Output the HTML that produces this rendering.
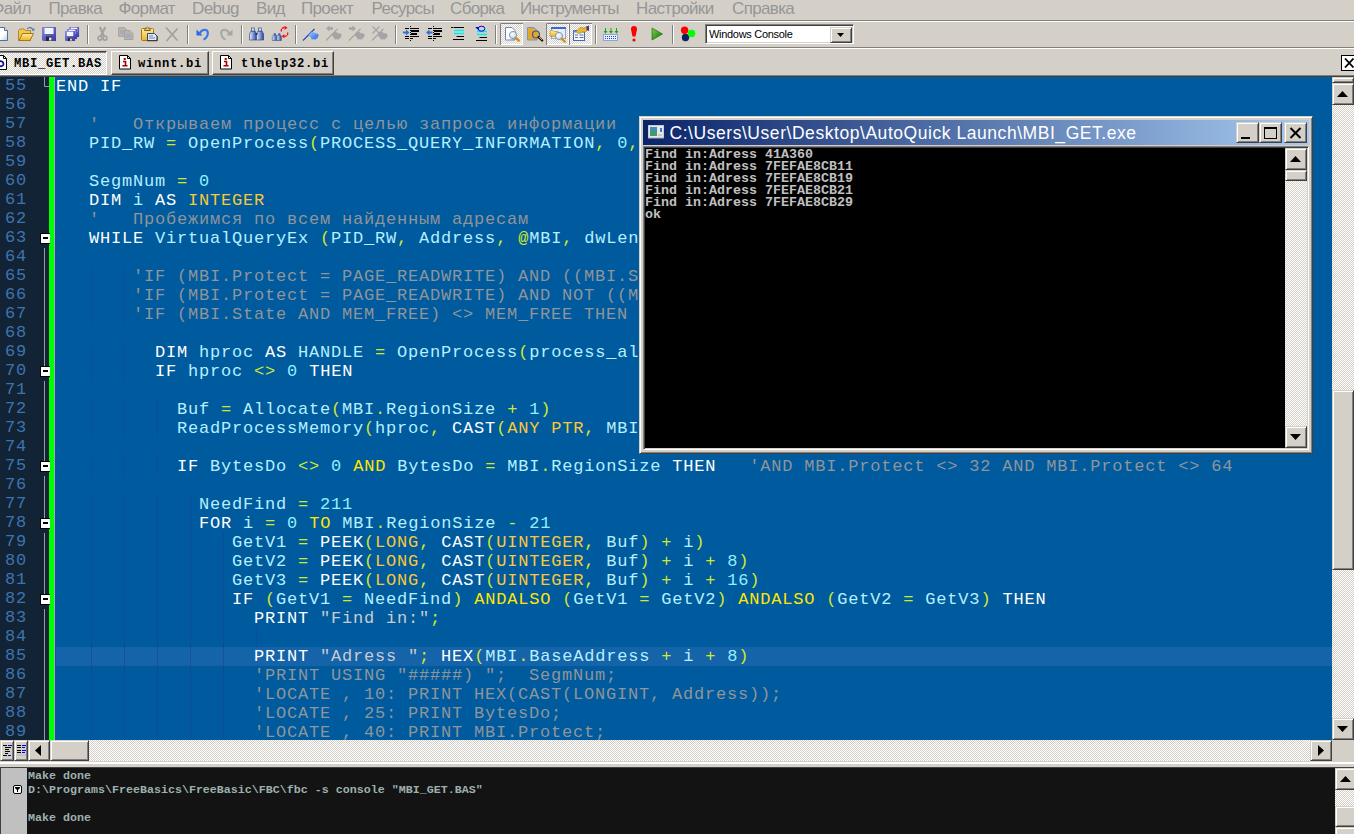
<!DOCTYPE html>
<html lang="ru">
<head>
<meta charset="utf-8">
<title>MBI_GET.BAS</title>
<style>
*{box-sizing:border-box;margin:0;padding:0}
html,body{width:1354px;height:834px;overflow:hidden;background:#d4d0c8}
body{position:relative;font-family:"Liberation Sans",sans-serif;color:#000}
.abs{position:absolute}
/* menu */
#menu{position:absolute;left:0;top:0;width:1354px;height:20px;background:#d4d0c8;overflow:hidden}
#menu span{position:absolute;top:-1px;font-size:17px;line-height:20px;color:#969696;white-space:nowrap;letter-spacing:-0.65px}
.hsep{position:absolute;left:0;width:1354px;height:2px;border-top:1px solid #808080;border-bottom:1px solid #fff}
/* toolbar */
#tb{position:absolute;left:0;top:22px;width:1354px;height:25px;background:#d4d0c8}
.vsep{position:absolute;top:3px;width:2px;height:19px;border-left:1px solid #808080;border-right:1px solid #fff}
/* tabs */
#tabs{position:absolute;left:0;top:49px;width:1354px;height:27px;background:#d4d0c8}
.tab{position:absolute;top:2px;height:24px;background:#d4d0c8;border:1px solid;border-color:#fff #404040 #404040 #fff;box-shadow:inset -1px -1px 0 #808080}
.tab span{position:absolute;top:4px;font-family:"Liberation Mono",monospace;font-weight:bold;font-size:12.2px;letter-spacing:.68px;line-height:16px;white-space:nowrap;color:#000}
.tab.act{border-color:#404040 #fff #fff #404040;box-shadow:inset 1px 1px 0 #808080;background-color:#eae8e3;background-image:conic-gradient(#fff 25%,#d4d0c8 0 50%,#fff 0 75%,#d4d0c8 0);background-size:2px 2px}
/* editor */
#ed{position:absolute;left:0;top:77px;width:1332px;height:663px;background:#005a9e;overflow:hidden}
#gut{position:absolute;left:0;top:0;width:49px;height:664px;background:#122336}
#grn{position:absolute;left:49px;top:0;width:5px;height:664px;background:#0f0}
#gl{position:absolute;left:54px;top:0;width:1px;height:664px;background:#a8acb0}
.mono{font-family:"Liberation Mono",monospace;font-size:17px;letter-spacing:.8px;line-height:19px;white-space:pre}
#nums{position:absolute;left:5px;top:-1px;color:#3d74ad}
#code{position:absolute;left:56px;top:0;color:#b4f0ff}
#cur{position:absolute;left:56px;top:570px;width:1276px;height:19px;background:#1563a8}
.k{color:#fff}.t{color:#f8c838}.y{color:#ffe600}.o{color:#d0e830}.c{color:#8f9599}.s{color:#c8ccd0}.n{color:#90f0ff}
/* generic classic controls */
.btn{position:absolute;background:#d4d0c8;border:1px solid;border-color:#d4d0c8 #404040 #404040 #d4d0c8;box-shadow:inset 1px 1px 0 #fff,inset -1px -1px 0 #808080}
.dith{position:absolute;background-color:#eae8e3;background-image:conic-gradient(#fff 25%,#d4d0c8 0 50%,#fff 0 75%,#d4d0c8 0);background-size:2px 2px}
.arr{position:absolute;background:#000}
.arr.up{width:11px;height:6px;clip-path:polygon(50% 0,100% 100%,0 100%)}
.arr.dn{width:11px;height:6px;clip-path:polygon(0 0,100% 0,50% 100%)}
.arr.lf{width:6px;height:11px;clip-path:polygon(100% 0,100% 100%,0 50%)}
.arr.rt{width:6px;height:11px;clip-path:polygon(0 0,100% 50%,0 100%)}
/* editor scrollbars */
#vs{position:absolute;left:1332px;top:77px;width:22px;height:663px}
#hs{position:absolute;left:0;top:740px;width:1354px;height:22px;background:#d4d0c8}
#split{position:absolute;left:0;top:762px;width:1354px;height:6px;background:#d4d0c8;border-top:2px solid #fff;border-bottom:1px solid #404040}
/* output pane */
#out{position:absolute;left:0;top:768px;width:1354px;height:66px;background:#131313;overflow:hidden;border-left:1px solid #404040}
#outg{position:absolute;left:0;top:0;width:26px;height:66px;background:#c0c0c0}
#outt{position:absolute;left:27px;top:1px;font-family:"Liberation Mono",monospace;font-weight:bold;font-size:11.67px;line-height:14px;white-space:pre;color:#9db0ae}
#ovs{position:absolute;left:1334px;top:0;width:22px;height:66px}
/* console window */
#con{position:absolute;left:639px;top:116px;width:674px;height:338px;background:#d4d0c8;border:1px solid;border-color:#d4d0c8 #404040 #404040 #d4d0c8;box-shadow:inset 1px 1px 0 #fff,inset -1px -1px 0 #808080}
#ctitle{position:absolute;left:3px;top:3px;width:666px;height:25px;background:linear-gradient(90deg,#0a246a 0%,#a6caf0 100%)}
#ctitle .tx{position:absolute;left:26.5px;top:1px;font-size:17.5px;letter-spacing:.55px;line-height:25px;color:#fff;white-space:nowrap}
#ccl{position:absolute;left:3px;top:29px;width:666px;height:304px;background:#000;border:1px solid;border-color:#808080 #fff #fff #808080;box-shadow:inset 1px 1px 0 #404040,inset -1px -1px 0 #d4d0c8}
#ctext{position:absolute;left:1px;top:2px;font-family:"Liberation Mono",monospace;font-weight:bold;font-size:13.33px;line-height:12px;white-space:pre;color:#c0c0c0}
#cvs{position:absolute;left:641px;top:1px;width:22px;height:300px}
.cb{position:absolute;top:2px;width:23px;height:21px}
#combo{position:absolute;left:705px;top:24px;width:149px;height:20px;background:#fff;border:1px solid;border-color:#808080 #fff #fff #808080;box-shadow:inset 1px 1px 0 #404040,inset -1px -1px 0 #d4d0c8}
#combo .tx{position:absolute;left:3px;top:2px;font-size:11px;letter-spacing:-.3px;line-height:14px;color:#000;white-space:nowrap}
</style>
</head>
<body>
<div id="menu">
<span style="left:-8.5px">Файл</span><span style="left:48.5px">Правка</span><span style="left:118.5px">Формат</span><span style="left:192px">Debug</span><span style="left:256px">Вид</span><span style="left:301px">Проект</span><span style="left:371.5px">Ресурсы</span><span style="left:450px">Сборка</span><span style="left:520px">Инструменты</span><span style="left:636px">Настройки</span><span style="left:732px">Справка</span>
</div>
<div class="hsep" style="top:20px"></div>
<div id="tb"></div>
<!--TBSVG-->
<svg id="tbs" class="abs" style="left:0;top:22px" width="1354" height="25" viewBox="0 22 1354 25">
<defs>
<linearGradient id="gdoc" x1="0" y1="0" x2="1" y2="1"><stop offset="0" stop-color="#fff"/><stop offset=".6" stop-color="#fff"/><stop offset="1" stop-color="#b8c8e0"/></linearGradient>
<linearGradient id="gfld" x1="0" y1="0" x2="0" y2="1"><stop offset="0" stop-color="#fff0a0"/><stop offset="1" stop-color="#f0b020"/></linearGradient>
<linearGradient id="gdsk" x1="0" y1="0" x2="1" y2="1"><stop offset="0" stop-color="#8888e0"/><stop offset="1" stop-color="#3838a8"/></linearGradient>
<linearGradient id="gbin" x1="0" y1="0" x2="1" y2="0"><stop offset="0" stop-color="#e8eefc"/><stop offset="1" stop-color="#2848a0"/></linearGradient>
<linearGradient id="gply" x1="0" y1="0" x2="1" y2="1"><stop offset="0" stop-color="#80d040"/><stop offset="1" stop-color="#107010"/></linearGradient>
<radialGradient id="glens" cx=".4" cy=".4" r=".7"><stop offset="0" stop-color="#fff"/><stop offset="1" stop-color="#b8d0e8"/></radialGradient>
<linearGradient id="gflag" x1="0" y1="0" x2="1" y2="1"><stop offset="0" stop-color="#a8c8ff"/><stop offset="1" stop-color="#2060e0"/></linearGradient>
<g id="sep"><rect x="0" y="25" width="1" height="19" fill="#808080"/><rect x="1" y="25" width="1" height="19" fill="#fff"/></g>
<g id="disk"><path d="M0 0h14v14H1l-1-1z" fill="url(#gdsk)"/><rect x="2.5" y="1" width="9" height="6" fill="#f4f4fc"/><rect x="4" y="9.5" width="6" height="4.5" fill="#282838"/><rect x="7" y="10.5" width="2.5" height="3" fill="#e0e0e8"/></g>
<g id="flag"><path d="M0 12L11.500 .5" fill="none" stroke-width="1.300"/><path d="M8.800 3.200C10.500 2.800 11.500 5 13 4.800S15 5.500 15.900 7C14.800 7.800 14.600 8.800 14.900 9.800C13.500 9.600 12.800 10.300 12.300 11.400C10.800 10.200 9.800 11.300 8.600 10.900C8.400 9.300 7 8.600 5.600 6.600Z" stroke="none"/></g>
<g id="gbm"><use href="#flag" fill="#a4a4a4" stroke="#a4a4a4"/></g>
<g id="lines" fill="#000"><rect x="2" y="2" width="4" height="1"/><rect x="8" y="2" width="8" height="1"/><rect x="8" y="4" width="8" height="2"/><rect x="8" y="7" width="6" height="2"/><rect x="2" y="10" width="4" height="1"/><rect x="8" y="10" width="8" height="1"/><rect x="2" y="12" width="4" height="1"/><rect x="8" y="12" width="2" height="1"/><rect x="7" y="0" width="1" height="1"/><rect x="7" y="2" width="1" height="1"/><rect x="7" y="4" width="1" height="1"/><rect x="7" y="6" width="1" height="1"/><rect x="7" y="8" width="1" height="1"/><rect x="7" y="10" width="1" height="1"/><rect x="7" y="12" width="1" height="1"/><rect x="7" y="14" width="1" height="1"/></g>
<g id="lens"><circle cx="0" cy="0" r="3.600" fill="url(#glens)" stroke="#8898b0" stroke-width="1"/><path d="M2.800 2.800l3 2.800" stroke="#d89018" stroke-width="2.400" stroke-linecap="round"/></g>
<pattern id="dp" width="2" height="2" patternUnits="userSpaceOnUse"><rect width="2" height="2" fill="#d4d0c8"/><rect width="1" height="1" fill="#fff"/><rect x="1" y="1" width="1" height="1" fill="#fff"/></pattern>
<g id="pbtn"><rect x="0" y="0" width="23" height="22" fill="url(#dp)"/><path d="M.5 22V.5H23" fill="none" stroke="#808080"/><path d="M22.500 1v20.500H1" fill="none" stroke="#fff"/></g>
</defs>
<!-- new -->
<path d="M-4 27.500h8.500l3 3V40.500h-11.500z" fill="url(#gdoc)" stroke="#5070a0"/><path d="M4.500 27.500v3h3" fill="#dde6f4" stroke="#5070a0"/>
<!-- open -->
<path d="M18.500 40.500v-10l1.500-1.500h4l1.500 1.500h5v10z" fill="#f0c850" stroke="#b08828"/><path d="M19 40.500l3.500-7h11l-3.500 7z" fill="url(#gfld)" stroke="#a87818"/><path d="M27 29c1.500-2 4.500-2 6 .5" fill="none" stroke="#4878c0" stroke-width="1.200"/><path d="M31.500 30.500l2.700.5.300-3z" fill="#4878c0"/>
<!-- save / save all -->
<use href="#disk" x="42" y="27"/>
<g transform="translate(69 27) scale(.72)"><use href="#disk"/></g><g transform="translate(67 29) scale(.72)"><use href="#disk"/></g><g transform="translate(65 31) scale(.72)"><use href="#disk"/></g>
<use href="#sep" x="87"/>
<!-- cut (disabled) -->
<g stroke="#a0a0a0" fill="none"><path d="M99.800 27l4.400 9.500M105.200 27l-4.400 9.500" stroke-width="2"/><circle cx="100" cy="38.200" r="1.900" stroke-width="1.600"/><circle cx="105" cy="38.200" r="1.900" stroke-width="1.600"/></g>
<!-- copy (disabled) -->
<path d="M118.500 27.500h6l3 3v6h-9z" fill="#b4b4b4" stroke="#a8a8a8"/><path d="M124.500 30.500h5.500l3 3v6h-8.500z" fill="#b4b4b4" stroke="#a4a4a4"/><path d="M120 31h5M120 33h4M126 35h5M126 37h5" stroke="#a0a0a0" stroke-width=".8"/>
<!-- paste -->
<rect x="141.500" y="28.500" width="12" height="12" rx="1" fill="url(#gfld)" stroke="#a87818"/><path d="M144.500 30.500l1-2.500h4l1 2.500z" fill="#e8d890" stroke="#806020"/><circle cx="147.500" cy="28" r="1" fill="#fff8c0" stroke="#806020" stroke-width=".6"/><path d="M147.500 33.500h7l2.500 2.500v4.500h-9.500z" fill="#dfe8f8" stroke="#284878"/><path d="M149 36h4M149 38h6" stroke="#6080b0" stroke-width=".9"/><path d="M147 40.800h10.300V36" fill="none" stroke="#503010" stroke-width=".8"/>
<!-- delete (disabled) -->
<path d="M166 27.500l11.500 13M177.500 28.500l-11 12.500" stroke="#a0a0a0" stroke-width="1.700" fill="none"/>
<use href="#sep" x="187"/>
<!-- undo -->
<path d="M196.500 29.500v6h6z" fill="#2868e0"/><path d="M200 33c1.500-3.800 7.300-4.600 7.800-.5.300 2.600-1 4.800-3.400 6.600" fill="none" stroke="#3878e8" stroke-width="2.200" stroke-linecap="round"/>
<!-- redo (disabled) -->
<path d="M232.500 29.500v6h-6z" fill="#a4a4a4"/><path d="M229 33c-1.500-3.800-7.300-4.600-7.800-.5-.3 2.600 1 4.800 3.400 6.600" fill="none" stroke="#a8a8a8" stroke-width="2.200" stroke-linecap="round"/>
<use href="#sep" x="241"/>
<!-- find -->
<g><path d="M251 31h4l1.500 3v6h-7v-6z" fill="url(#gbin)" stroke="#203880" stroke-width=".6"/><rect x="251.500" y="28" width="3" height="3" fill="#d8e0f8" stroke="#203880" stroke-width=".6"/><path d="M258 31h4l1.500 3v6h-7v-6z" fill="url(#gbin)" stroke="#203880" stroke-width=".6"/><rect x="258.500" y="28" width="3" height="3" fill="#d8e0f8" stroke="#203880" stroke-width=".6"/><rect x="255.500" y="33" width="2" height="2" fill="#203880"/></g>
<!-- replace -->
<g><path d="M273.500 35h2.500l.8 1.500v4h-4.500v-4z" fill="url(#gbin)" stroke="#203880" stroke-width=".5"/><rect x="273.800" y="33.300" width="2" height="1.700" fill="#3858b0"/><path d="M278 35h2.500l.8 1.500v4h-4.500v-4z" fill="url(#gbin)" stroke="#203880" stroke-width=".5"/><rect x="278.300" y="33.300" width="2" height="1.700" fill="#3858b0"/><path d="M281.500 31.500c-1-2.500 1-4 3.500-3.800M287.500 32.500c1 2.500-1 4-3.500 3.800" fill="none" stroke="#f00" stroke-width="1.300" stroke-dasharray="2.500 .5"/><path d="M284.500 25.800l3 2-3 2zM284.500 34.300l-3 2 3 2z" fill="#f00"/></g>
<use href="#sep" x="295"/>
<!-- bookmarks -->
<use href="#flag" x="303" y="28.500" fill="url(#gflag)" stroke="#2850b0"/>
<use href="#gbm" x="326" y="28.500"/><path d="M326 28.500l3.500-3v1.800h3.500v2.400h-3.500v1.800z" fill="#a4a4a4"/>
<use href="#gbm" x="349" y="28.500"/><path d="M356 28.500l-3.500-3v1.800h-3.500v2.400h3.500v1.800z" fill="#a4a4a4"/>
<use href="#gbm" x="372" y="28.500"/><path d="M372.500 26.500l7 7M379.500 26.500l-7 7" stroke="#a4a4a4" stroke-width="1.300"/>
<use href="#sep" x="395"/>
<!-- indent / unindent -->
<use href="#lines" x="403" y="26"/><path d="M403 31.500h3v-2l3.500 3-3.500 3v-2h-3z" fill="#3070e0"/>
<use href="#lines" x="426" y="26"/><path d="M432.500 31.500h-3v-2l-3.500 3 3.500 3v-2h3z" fill="#3070e0"/>
<!-- format -->
<path d="M451 27.500h2M453.500 27.500h10.500M456.500 36.500h7.500M453 39.500h11" stroke="#000" stroke-width="1.200"/><path d="M454 30.500h10M454 33.500h10" stroke="#00f0f0" stroke-width="1.300"/>
<!-- unformat -->
<path d="M477 31.500h10M477 34.500h10" stroke="#00f0f0" stroke-width="1.300"/><path d="M479.500 37.500h7.500M476 40.500h11" stroke="#000" stroke-width="1.200"/><ellipse cx="481.500" cy="28.700" rx="3.300" ry="2.500" fill="none" stroke="#0000e0" stroke-width="1"/><path d="M475.200 27l3.500 0 0 3.500z" fill="#0000e0"/>
<use href="#sep" x="495"/>
<!-- pressed toggle buttons -->
<use href="#pbtn" x="500" y="23"/>
<path d="M505.500 27.500h6.500l3 3v9.500h-9.500z" fill="url(#gdoc)" stroke="#7088b8"/><use href="#lens" x="513" y="35"/>
<path d="M527.500 27.500h6.500l3 3v9.500h-9.500z" fill="#e0a830" stroke="#8090c0"/><g transform="translate(536 34.500)"><circle r="3.500" fill="#e0a830" stroke="#385890" stroke-width="1.200"/><path d="M2.600 2.600l3.600 3.400" stroke="#181000" stroke-width="2.200" stroke-linecap="round"/><path d="M3 2.500l3 2.800" stroke="#e8b020" stroke-width="1"/></g>
<use href="#pbtn" x="546" y="23"/>
<rect x="551.500" y="27.500" width="14" height="11" fill="#e8eef8" stroke="#90a8d8"/><rect x="551" y="27" width="15" height="2" fill="#3868d0"/><path d="M550 30.500h3l1 1h4v5h-8z" fill="url(#gfld)" stroke="#b08828" stroke-width=".6"/><use href="#lens" x="559" y="36"/>
<use href="#pbtn" x="569" y="23"/>
<rect x="573.500" y="30.500" width="11" height="10" fill="#f4f6fc" stroke="#4868b0"/><rect x="573.500" y="30.500" width="11" height="2" fill="#6888d0"/><path d="M575 35h3M579.500 35h4M575 37.500h3M579.500 37.500h4" stroke="#5070b0" stroke-width="1"/><path d="M576 31.500l4-4 4 .5 3-1.500 .5 4-3 1.500-3 0-2 2z" fill="#e8b830" stroke="#a07818" stroke-width=".6"/><path d="M586.500 26.500l2.500-1v5.500l-2.500-1z" fill="#5030a0"/>
<use href="#sep" x="595"/>
<!-- compile -->
<rect x="603.500" y="34.500" width="14" height="6" fill="#e8f0ff" stroke="#90a0e0"/><g fill="#2050c0"><rect x="605" y="36" width="1" height="1"/><rect x="607" y="36" width="1" height="1"/><rect x="609" y="36" width="1" height="1"/><rect x="611" y="36" width="1" height="1"/><rect x="613" y="36" width="1" height="1"/><rect x="615" y="36" width="1" height="1"/><rect x="605" y="38" width="1" height="1"/><rect x="607" y="38" width="1" height="1"/><rect x="609" y="38" width="1" height="1"/><rect x="611" y="38" width="1" height="1"/><rect x="613" y="38" width="1" height="1"/><rect x="615" y="38" width="1" height="1"/></g><g fill="#20a020"><path d="M603.500 31h4l-2 2.800zM609 31h4l-2 2.800zM614.500 31h4l-2 2.800z"/><rect x="605" y="28" width="1" height="3"/><rect x="610.500" y="28" width="1" height="3"/><rect x="616" y="28" width="1" height="3"/></g>
<!-- exclamation -->
<path d="M634 26c2.200 0 3.200 1.500 3 3.500l-1.500 7h-3l-1.500-7c-.2-2 .8-3.500 3-3.500z" fill="#f00"/><circle cx="634" cy="40" r="1.600" fill="#f00"/>
<!-- play -->
<path d="M652 28l10.500 6-10.500 6z" fill="url(#gply)" stroke="#106010" stroke-width=".6"/>
<use href="#sep" x="672"/>
<!-- rgb -->
<circle cx="685.500" cy="37.500" r="3.700" fill="#0c2060"/><circle cx="684.600" cy="30.300" r="3.700" fill="#f00"/><circle cx="691.600" cy="33.500" r="3.700" fill="#0f0"/>
</svg>
<!--/TBSVG-->
<div id="combo"><div class="tx">Windows Console</div><div class="btn" style="left:124px;top:2px;width:22px;height:16px"><div class="arr dn" style="left:6px;top:5px;width:7px;height:4px"></div></div></div>

<div class="hsep" style="top:47px"></div>
<div id="tabs">
<div class="tab act" style="left:-12px;width:119px"><svg class="abs" style="left:4px;top:3px" width="16" height="15" viewBox="0 0 16 15"><path d="M1.500 .5h9l3 3v11h-12z" fill="#fff" stroke="#000"/><path d="M10.500 .5v3h3" fill="none" stroke="#000"/><path d="M4.500 4v7M4.500 7.500c3-2.500 6-1 6 1.500s-3 3-6 1" fill="none" stroke="#1010a0" stroke-width="1.800"/></svg><span style="left:25px">MBI_GET.BAS</span></div>
<div class="tab" style="left:111px;width:98px"><svg class="abs" style="left:7px;top:3px" width="13" height="15" viewBox="0 0 13 15"><path d="M.5 .5h8l3 3v10.500h-11z" fill="#fff" stroke="#000"/><path d="M8.500 .5v3h3" fill="none" stroke="#000"/><path d="M4 6.500h2.500v4M3.500 10.800h5" stroke="#a00000" stroke-width="1.600" fill="none"/><rect x="4.700" y="3" width="2" height="2" fill="#a00000"/></svg><span style="left:26px">winnt.bi</span></div>
<div class="tab" style="left:212px;width:122px"><svg class="abs" style="left:7px;top:3px" width="13" height="15" viewBox="0 0 13 15"><path d="M.5 .5h8l3 3v10.500h-11z" fill="#fff" stroke="#000"/><path d="M8.500 .5v3h3" fill="none" stroke="#000"/><path d="M4 6.500h2.500v4M3.500 10.800h5" stroke="#a00000" stroke-width="1.600" fill="none"/><rect x="4.700" y="3" width="2" height="2" fill="#a00000"/></svg><span style="left:28px">tlhelp32.bi</span></div>
<div class="abs" style="left:1341px;top:6px;width:16px;height:16px;background:#fff;border:1px solid #000"><svg class="abs" style="left:2px;top:2px" width="11" height="10" viewBox="0 0 11 10"><path d="M1 .5l8.500 9M9.500 .5L1 9.500" stroke="#000" stroke-width="1.800" fill="none"/></svg></div>
</div>
<div class="abs" style="left:0;top:75px;width:1354px;height:2px;background:#404040;border-top:1px solid #808080"></div>
<div id="ed">
<div id="gut"></div><div id="grn"></div><div id="gl"></div>
<svg id="fold" class="abs" style="left:38px;top:0" width="12" height="663" viewBox="38 0 12 663"><path d="M44.500 0v9.500h6" fill="none" stroke="#9a9a9a"/><path d="M44.500 171V289M44.500 304V384M44.500 399V441M44.500 456V517M44.500 532V663" fill="none" stroke="#9a9a9a"/><rect x="40.500" y="156.5" width="10" height="10" fill="#fff" stroke="#000"/><rect x="43" y="160" width="5" height="2" fill="#000"/><rect x="40.500" y="289.5" width="10" height="10" fill="#fff" stroke="#000"/><rect x="43" y="293" width="5" height="2" fill="#000"/><rect x="40.500" y="384.5" width="10" height="10" fill="#fff" stroke="#000"/><rect x="43" y="388" width="5" height="2" fill="#000"/><rect x="40.500" y="441.5" width="10" height="10" fill="#fff" stroke="#000"/><rect x="43" y="445" width="5" height="2" fill="#000"/><rect x="40.500" y="517.5" width="10" height="10" fill="#fff" stroke="#000"/><rect x="43" y="521" width="5" height="2" fill="#000"/></svg>
<div id="cur"></div>
<svg id="guides" class="abs" style="left:0;top:0" width="300" height="663"><path d="M91.5 190v57M91.5 266v38M91.5 323v38M91.5 380v19M91.5 418v247M124.5 190v57M124.5 266v38M124.5 323v38M124.5 380v19M124.5 418v247M157.5 323v38M157.5 380v19M157.5 418v247M190.5 418v247M223.5 456v209M256.5 551v19" fill="none" stroke="#2238a0" stroke-width="1" stroke-dasharray="1 1"/></svg>
<div id="nums" class="mono">55
56
57
58
59
60
61
62
63
64
65
66
67
68
69
70
71
72
73
74
75
76
77
78
79
80
81
82
83
84
85
86
87
88
89</div>
<div id="code" class="mono"><span class="k">END</span> <span class="k">IF</span>

   <span class="c">'   Открываем процесс с целью запроса информации</span>
   PID_RW <span class="o">=</span> OpenProcess<span class="o">(</span>PROCESS_QUERY_INFORMATION<span class="o">,</span> <span class="n">0</span><span class="o">,</span>

   SegmNum <span class="o">=</span> <span class="n">0</span>
   <span class="k">DIM</span> i <span class="k">AS</span> <span class="t">INTEGER</span>
   <span class="c">'   Пробежимся по всем найденным адресам</span>
   <span class="k">WHILE</span> VirtualQueryEx <span class="o">(</span>PID_RW<span class="o">,</span> Address<span class="o">,</span> <span class="o">@</span>MBI<span class="o">,</span> dwLen

       <span class="c">'IF (MBI.Protect = PAGE_READWRITE) AND ((MBI.S</span>
       <span class="c">'IF (MBI.Protect = PAGE_READWRITE) AND NOT ((M</span>
       <span class="c">'IF (MBI.State AND MEM_FREE) &lt;&gt; MEM_FREE THEN </span>

         <span class="k">DIM</span> hproc <span class="k">AS</span> HANDLE <span class="o">=</span> OpenProcess<span class="o">(</span>process_al
         <span class="k">IF</span> hproc <span class="o">&lt;</span><span class="o">&gt;</span> <span class="n">0</span> <span class="k">THEN</span>

           Buf <span class="o">=</span> Allocate<span class="o">(</span>MBI<span class="o">.</span>RegionSize <span class="o">+</span> <span class="n">1</span><span class="o">)</span>
           ReadProcessMemory<span class="o">(</span>hproc<span class="o">,</span> <span class="k">CAST</span><span class="o">(</span><span class="t">ANY</span> <span class="t">PTR</span><span class="o">,</span> MBI

           <span class="k">IF</span> BytesDo <span class="o">&lt;</span><span class="o">&gt;</span> <span class="n">0</span> <span class="y">AND</span> BytesDo <span class="o">=</span> MBI<span class="o">.</span>RegionSize <span class="k">THEN</span>   <span class="c">'AND MBI.Protect &lt;&gt; 32 AND MBI.Protect &lt;&gt; 64</span>

             NeedFind <span class="o">=</span> <span class="n">211</span>
             <span class="k">FOR</span> i <span class="o">=</span> <span class="n">0</span> <span class="y">TO</span> MBI<span class="o">.</span>RegionSize <span class="o">-</span> <span class="n">21</span>
                GetV1 <span class="o">=</span> <span class="k">PEEK</span><span class="o">(</span><span class="t">LONG</span><span class="o">,</span> <span class="k">CAST</span><span class="o">(</span><span class="t">UINTEGER</span><span class="o">,</span> Buf<span class="o">)</span> <span class="o">+</span> i<span class="o">)</span>
                GetV2 <span class="o">=</span> <span class="k">PEEK</span><span class="o">(</span><span class="t">LONG</span><span class="o">,</span> <span class="k">CAST</span><span class="o">(</span><span class="t">UINTEGER</span><span class="o">,</span> Buf<span class="o">)</span> <span class="o">+</span> i <span class="o">+</span> <span class="n">8</span><span class="o">)</span>
                GetV3 <span class="o">=</span> <span class="k">PEEK</span><span class="o">(</span><span class="t">LONG</span><span class="o">,</span> <span class="k">CAST</span><span class="o">(</span><span class="t">UINTEGER</span><span class="o">,</span> Buf<span class="o">)</span> <span class="o">+</span> i <span class="o">+</span> <span class="n">16</span><span class="o">)</span>
                <span class="k">IF</span> <span class="o">(</span>GetV1 <span class="o">=</span> NeedFind<span class="o">)</span> <span class="y">ANDALSO</span> <span class="o">(</span>GetV1 <span class="o">=</span> GetV2<span class="o">)</span> <span class="y">ANDALSO</span> <span class="o">(</span>GetV2 <span class="o">=</span> GetV3<span class="o">)</span> <span class="k">THEN</span>
                  <span class="k">PRINT</span> <span class="s">"Find in:"</span><span class="o">;</span>

                  <span class="k">PRINT</span> <span class="s">"Adress "</span><span class="o">;</span> <span class="k">HEX</span><span class="o">(</span>MBI<span class="o">.</span>BaseAddress <span class="o">+</span> i <span class="o">+</span> <span class="n">8</span><span class="o">)</span>
                  <span class="c">'PRINT USING "#####) ";  SegmNum;</span>
                  <span class="c">'LOCATE , 10: PRINT HEX(CAST(LONGINT, Address));</span>
                  <span class="c">'LOCATE , 25: PRINT BytesDo;</span>
                  <span class="c">'LOCATE , 40: PRINT MBI.Protect;</span></div>
</div>
<div id="vs" class="dith">
<div class="btn" style="left:0;top:0;width:22px;height:6px"></div>
<div class="btn" style="left:0;top:6px;width:22px;height:22px"><div class="arr up" style="left:4px;top:7px"></div></div>
<div class="btn" style="left:0;top:313px;width:22px;height:180px"></div>
<div class="btn" style="left:0;top:641px;width:22px;height:22px"><div class="arr dn" style="left:4px;top:7px"></div></div>
</div>
<div id="hs">
<div class="btn" style="left:0;top:0;width:14px;height:21px"><svg class="abs" style="left:1px;top:3px" width="12" height="14" viewBox="2 744 12 14"><path d="M3 745.500h4M5 747.500h6M5 749.500h4M5 751.500h5M5 753.500h3M3 755.500h4" stroke="#000" stroke-width="1"/><path d="M8 745.500h4M8 755.500h3" stroke="#00f" stroke-width="1"/></svg></div>
<div class="btn" style="left:14px;top:0;width:14px;height:21px"><svg class="abs" style="left:1px;top:3px" width="12" height="14" viewBox="16 744 12 14"><rect x="17" y="754" width="9" height="2" fill="#c4c4c4"/><path d="M17 745.500h4M17 747.500h4M17 750.500h4M17 752.500h4" stroke="#000" stroke-width="1"/><path d="M22 745.500h4M22 747.500h3M22 750.500h4M22 752.500h3" stroke="#00f" stroke-width="1"/></svg></div>
<div class="dith" style="left:28px;top:0;width:1304px;height:21px"></div>
<div class="btn" style="left:28px;top:0;width:22px;height:21px"><div class="arr lf" style="left:6px;top:4px"></div></div>
<div class="btn" style="left:50px;top:0;width:39px;height:21px"></div>
<div class="btn" style="left:1310px;top:0;width:22px;height:21px"><div class="arr rt" style="left:7px;top:4px"></div></div>
</div>
<div id="split"></div>
<div id="out">
<div id="outg"></div>
<svg class="abs" style="left:12px;top:17px" width="9" height="9" viewBox="0 0 9 9"><rect x=".5" y=".5" width="8" height="8" rx="1.500" fill="#fff" stroke="#000"/><path d="M2 2h5v1l-2 2v2h-1v-2l-2-2z" fill="#000"/></svg>
<div id="outt">Make done
D:\Programs\FreeBasics\FreeBasic\FBC\fbc -s console "MBI_GET.BAS"

Make done</div>
<div id="ovs" class="dith">
<div class="btn" style="left:0;top:0;width:22px;height:22px"><div class="arr up" style="left:4px;top:7px"></div></div>
<div class="btn" style="left:0;top:38px;width:22px;height:21px"></div>
<div class="btn" style="left:0;top:59px;width:22px;height:22px"></div>
</div>
</div>
<div id="con">
<div id="ctitle">
<svg class="abs" style="left:5px;top:5px" width="16" height="14" viewBox="0 0 16 14"><rect x="0" y="0" width="16" height="13" fill="#e8e8e8"/><rect x="0" y="0" width="16" height="13" fill="none" stroke="#b0b0b0"/><rect x="2" y="2" width="7" height="9" fill="#3c9a7a"/><rect x="2" y="2" width="7" height="3" fill="#4a8ac0"/><rect x="12" y="3" width="2" height="4" fill="#3a78c8"/><rect x="10" y="9" width="4" height="2" fill="#c8c8c8"/></svg>
<div class="tx">C:\Users\User\Desktop\AutoQuick Launch\MBI_GET.exe</div>
<div class="btn cb" style="left:593px"><div class="abs" style="left:4px;top:14px;width:9px;height:2px;background:#000"></div></div>
<div class="btn cb" style="left:616px"><div class="abs" style="left:4px;top:4px;width:13px;height:12px;border:1px solid #000;border-top-width:2px"></div></div>
<div class="btn cb" style="left:641px"><svg class="abs" style="left:4px;top:4px" width="13" height="12" viewBox="0 0 13 12"><path d="M1.500 1L11.500 11M11.500 1L1.500 11" stroke="#000" stroke-width="2" fill="none"/></svg></div>
</div>
<div id="ccl">
<div id="ctext">Find in:Adress 41A360
Find in:Adress 7FEFAE8CB11
Find in:Adress 7FEFAE8CB19
Find in:Adress 7FEFAE8CB21
Find in:Adress 7FEFAE8CB29
ok</div>
<div id="cvs" class="dith">
<div class="btn" style="left:0;top:0;width:22px;height:22px"><div class="arr up" style="left:4px;top:7px"></div></div>
<div class="btn" style="left:0;top:22px;width:22px;height:11px"></div>
<div class="btn" style="left:0;top:278px;width:22px;height:22px"><div class="arr dn" style="left:4px;top:7px"></div></div>
</div>
</div>
</div>
</body>
</html>
